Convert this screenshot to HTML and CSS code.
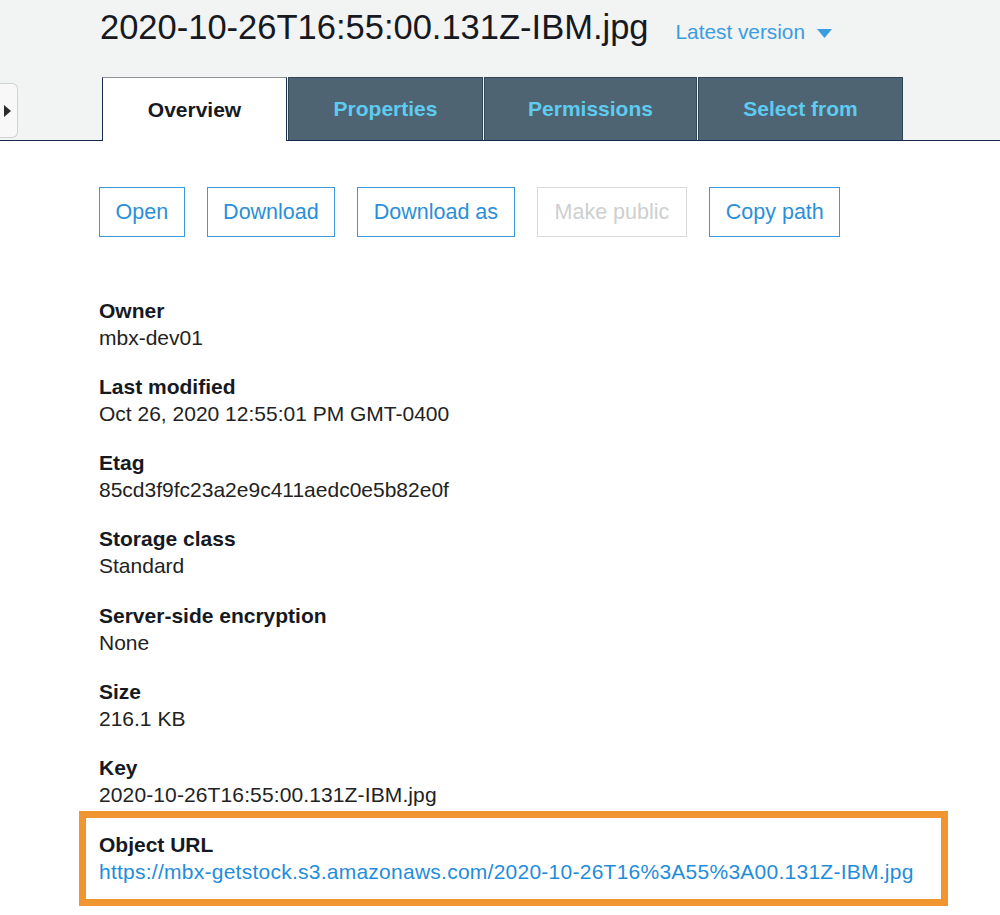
FILE: index.html
```html
<!DOCTYPE html>
<html lang="en">
<head>
<meta charset="utf-8">
<title>2020-10-26T16:55:00.131Z-IBM.jpg</title>
<link rel="stylesheet" href="styles.css">
</head>
<body>
<header class="top">
  <button class="side-toggle" aria-label="Open navigation">
    <svg width="7" height="12" viewBox="0 0 7 12"><polygon points="0,0 7,6 0,12" fill="#2b2b2b"/></svg>
  </button>
  <div class="titlebar">
    <h1 class="title">2020-10-26T16:55:00.131Z-IBM.jpg</h1>
    <a class="version">Latest version<svg class="caret" width="15" height="9" viewBox="0 0 15 9"><polygon points="0,0 15,0 7.5,9" fill="#3a9de0"/></svg></a>
  </div>
  <nav class="tabs">
    <div class="tab tab-active tab-overview">Overview</div>
    <div class="tab tab-properties">Properties</div>
    <div class="tab tab-permissions">Permissions</div>
    <div class="tab tab-select">Select from</div>
  </nav>
</header>
<main class="content">
  <div class="actions">
    <button class="btn">Open</button>
    <button class="btn">Download</button>
    <button class="btn">Download as</button>
    <button class="btn btn-disabled">Make public</button>
    <button class="btn">Copy path</button>
  </div>
  <dl class="props">
    <div class="prop"><dt>Owner</dt><dd>mbx-dev01</dd></div>
    <div class="prop"><dt>Last modified</dt><dd>Oct 26, 2020 12:55:01 PM GMT-0400</dd></div>
    <div class="prop"><dt>Etag</dt><dd>85cd3f9fc23a2e9c411aedc0e5b82e0f</dd></div>
    <div class="prop"><dt>Storage class</dt><dd>Standard</dd></div>
    <div class="prop"><dt>Server-side encryption</dt><dd>None</dd></div>
    <div class="prop"><dt>Size</dt><dd>216.1 KB</dd></div>
    <div class="prop"><dt>Key</dt><dd class="key">2020-10-26T16:55:00.131Z-IBM.jpg</dd></div>
    <div class="prop prop-highlight"><dt>Object URL</dt><dd><a class="link">https://mbx-getstock.s3.amazonaws.com/2020-10-26T16%3A55%3A00.131Z-IBM.jpg</a></dd></div>
  </dl>
</main>
</body>
</html>
```
FILE: styles.css
```css
html, body {
  margin: 0;
  padding: 0;
  background: #ffffff;
}

body {
  font-family: "Liberation Sans", Arial, Helvetica, sans-serif;
  color: #16191f;
}

.top {
  position: relative;
  height: 140px;
  background: #f2f3f3;
  border-bottom: 1px solid #17294a;
}

.side-toggle {
  position: absolute;
  left: 0;
  top: 83px;
  width: 18px;
  height: 55px;
  padding: 0 0 0 4px;
  margin: 0;
  box-sizing: border-box;
  background: #f8f8f8;
  border: 1px solid #cfd1d3;
  border-left: none;
  border-radius: 0 6px 6px 0;
  display: flex;
  align-items: center;
  justify-content: flex-start;
}

.side-toggle svg {
  display: block;
}

.titlebar {
  display: flex;
  align-items: baseline;
  height: 77px;
  box-sizing: border-box;
  padding: 7px 0 0 100px;
}

.title {
  margin: 0;
  font-size: 34.5px;
  line-height: 40px;
  font-weight: 400;
  color: #16191f;
}

.version {
  margin-left: 27px;
  font-size: 20.8px;
  color: #3a9de0;
  white-space: nowrap;
}

.caret {
  margin-left: 12px;
  vertical-align: 1px;
}

.tabs {
  display: flex;
  align-items: flex-end;
  gap: 1px;
  height: 63px;
  padding-left: 102px;
}

.tab {
  height: 63px;
  box-sizing: border-box;
  display: flex;
  align-items: center;
  justify-content: center;
  font-size: 21px;
  font-weight: 700;
  background: #4f6472;
  color: #5ecbf1;
  border: 1px solid #2f4656;
  border-bottom: none;
}

.tab-overview { width: 185px; }
.tab-properties { width: 195px; }
.tab-permissions { width: 213px; }
.tab-select { width: 205px; }

.tab-active {
  position: relative;
  height: 64px;
  margin-bottom: -1px;
  background: #ffffff;
  color: #16191f;
  border-top: 1px solid #8d9296;
  border-left: 1px solid #1b2b4b;
  border-right: 1px solid #1b2b4b;
}

.content {
  padding-left: 99px;
}

.actions {
  display: flex;
  gap: 22px;
  margin-top: 46px;
}

.btn {
  height: 50px;
  padding: 0 15.5px;
  margin: 0;
  background: #ffffff;
  border: 1px solid #3c98da;
  border-radius: 0;
  color: #2a8fd8;
  font-family: "Liberation Sans", Arial, Helvetica, sans-serif;
  font-size: 21.5px;
  font-weight: 400;
  white-space: nowrap;
}

.btn-wide {
  padding: 0 17px;
}

.btn-disabled {
  border-color: #d9dadb;
  color: #cdcfd1;
  padding: 0 17px;
}

.props {
  margin: 59.5px 0 0 0;
  padding: 0;
}

.prop {
  margin-bottom: 22.3px;
  font-size: 21px;
  line-height: 27px;
}

.prop dt {
  font-weight: 700;
  color: #16191f;
}

.prop dd {
  margin: 0;
  color: #222222;
}

.prop dd.key {
  letter-spacing: 0.12px;
}

.prop-highlight {
  width: 869px;
  box-sizing: border-box;
  margin: -20px 0 0 -20px;
  padding: 13px 0 14.5px 13px;
  border: 7px solid #f0952f;
}

.link {
  color: #1f8ddb;
  text-decoration: none;
  letter-spacing: 0.25px;
}
```
